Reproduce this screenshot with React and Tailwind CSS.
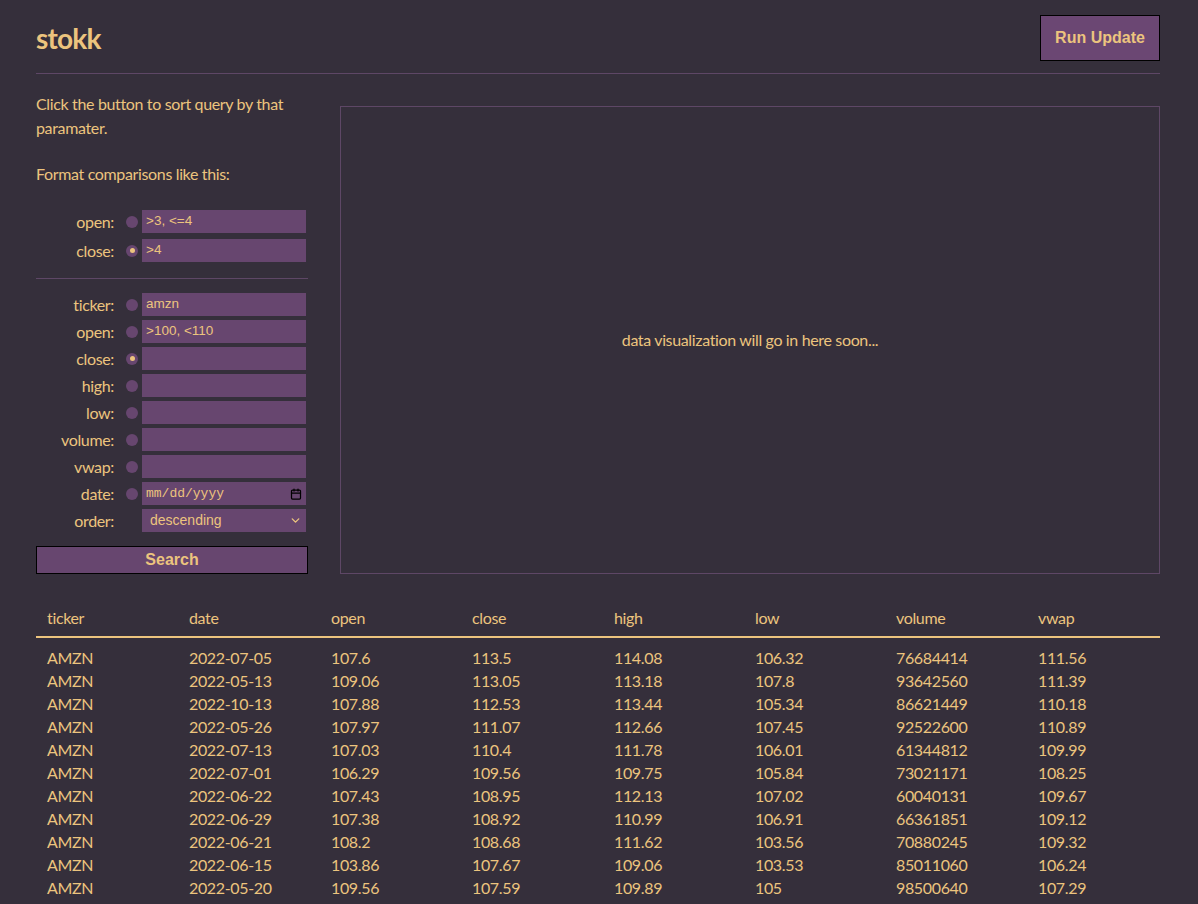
import { ChevronDown, Calendar } from "lucide-react";

const rows = [
  ["AMZN", "2022-07-05", "107.6", "113.5", "114.08", "106.32", "76684414", "111.56"],
  ["AMZN", "2022-05-13", "109.06", "113.05", "113.18", "107.8", "93642560", "111.39"],
  ["AMZN", "2022-10-13", "107.88", "112.53", "113.44", "105.34", "86621449", "110.18"],
  ["AMZN", "2022-05-26", "107.97", "111.07", "112.66", "107.45", "92522600", "110.89"],
  ["AMZN", "2022-07-13", "107.03", "110.4", "111.78", "106.01", "61344812", "109.99"],
  ["AMZN", "2022-07-01", "106.29", "109.56", "109.75", "105.84", "73021171", "108.25"],
  ["AMZN", "2022-06-22", "107.43", "108.95", "112.13", "107.02", "60040131", "109.67"],
  ["AMZN", "2022-06-29", "107.38", "108.92", "110.99", "106.91", "66361851", "109.12"],
  ["AMZN", "2022-06-21", "108.2", "108.68", "111.62", "103.56", "70880245", "109.32"],
  ["AMZN", "2022-06-15", "103.86", "107.67", "109.06", "103.53", "85011060", "106.24"],
  ["AMZN", "2022-05-20", "109.56", "107.59", "109.89", "105", "98500640", "107.29"],
];

const cols = [
  ["ticker", "w-[142px]"],
  ["date", "w-[142px]"],
  ["open", "w-[141px]"],
  ["close", "w-[142px]"],
  ["high", "w-[141px]"],
  ["low", "w-[141px]"],
  ["volume", "w-[142px]"],
  ["vwap", ""],
];

function Radio({ checked }) {
  return (
    <span className="flex h-[12px] w-[12px] shrink-0 items-center justify-center rounded-full bg-[#67466f]">
      {checked && <span className="h-[5px] w-[5px] rounded-full bg-[#ecc47e]" />}
    </span>
  );
}

function Field({ label, value, checked, noRadio, children }) {
  return (
    <div className="flex h-[23px] items-center">
      <span className="w-[78px] text-right">{label}</span>
      <span className="ml-[12px] w-[12px]">{!noRadio && <Radio checked={checked} />}</span>
      <div className="ml-[4px] flex h-[23px] w-[164px] items-center bg-[#67466f] px-[4px] font-['Liberation_Sans',sans-serif] text-[13.5px] tracking-normal">
        {children || value}
      </div>
    </div>
  );
}

export default function App() {
  return (
    <div className="min-h-[904px] bg-[#352f3b] font-['Lato',sans-serif] text-[16px] tracking-[-0.35px] text-[#ecc47e]">
      <div className="ml-[36px] w-[1124px]">
        {/* Header */}
        <div className="flex items-center justify-between border-b border-[#5e4766] pt-[15px] pb-[12px]">
          <span className="text-[28px] font-bold tracking-[-0.8px]">stokk</span>
          <div className="flex h-[46px] w-[120px] items-center justify-center border border-black bg-[#6b4773] font-['Liberation_Sans',sans-serif] text-[16px] font-bold tracking-normal">
            Run Update
          </div>
        </div>

        <div className="flex">
          {/* Left panel */}
          <div className="w-[272px] pt-[18px]">
            <p className="leading-[24px]">Click the button to sort query by that paramater.</p>
            <p className="mt-[22px] leading-[24px]">Format comparisons like this:</p>

            <div className="mt-[24px] flex flex-col gap-[6px]">
              <Field label="open:" value=">3, <=4" />
              <Field label="close:" value=">4" checked />
            </div>

            <div className="mt-[16px] mb-[14px] border-t border-[#5e4766]" />

            <div className="flex flex-col gap-[4px]">
              <Field label="ticker:" value="amzn" />
              <Field label="open:" value=">100, <110" />
              <Field label="close:" value="" checked />
              <Field label="high:" value="" />
              <Field label="low:" value="" />
              <Field label="volume:" value="" />
              <Field label="vwap:" value="" />
              <Field label="date:">
                <div className="flex w-full items-center justify-between font-['Liberation_Mono',monospace] text-[13px]">
                  <span>mm/dd/yyyy</span>
                  <Calendar className="h-[12px] w-[12px] text-black" strokeWidth={2.5} />
                </div>
              </Field>
              <Field label="order:" noRadio>
                <div className="flex w-full items-center justify-between pl-[4px] text-[14px]">
                  <span>descending</span>
                  <ChevronDown className="h-[13px] w-[13px]" strokeWidth={2.5} />
                </div>
              </Field>
            </div>

            <div className="mt-[14px] flex h-[28px] items-center justify-center border border-black bg-[#67466f] font-['Liberation_Sans',sans-serif] text-[16px] font-bold tracking-normal">
              Search
            </div>
          </div>

          {/* Visualization box */}
          <div className="ml-[32px] mt-[32px] flex h-[468px] flex-1 items-center justify-center border border-[#5e4766] text-[16px]">
            data visualization will go in here soon...
          </div>
        </div>

        {/* Table */}
        <table className="mt-[25px] w-full table-fixed border-collapse">
          <thead>
            <tr className="border-b-2 border-[#ecc47e]">
              {cols.map(([c, w]) => (
                <th key={c} className={`${w} h-[38px] pl-[11px] text-left align-middle font-normal`}>
                  {c}
                </th>
              ))}
            </tr>
          </thead>
          <tbody>
            <tr>
              <td colSpan={8} className="h-[9px]" />
            </tr>
            {rows.map((r, i) => (
              <tr key={i}>
                {r.map((v, j) => (
                  <td key={j} className="h-[23px] pl-[11px] leading-[23px]">
                    {v}
                  </td>
                ))}
              </tr>
            ))}
          </tbody>
        </table>
      </div>
    </div>
  );
}
